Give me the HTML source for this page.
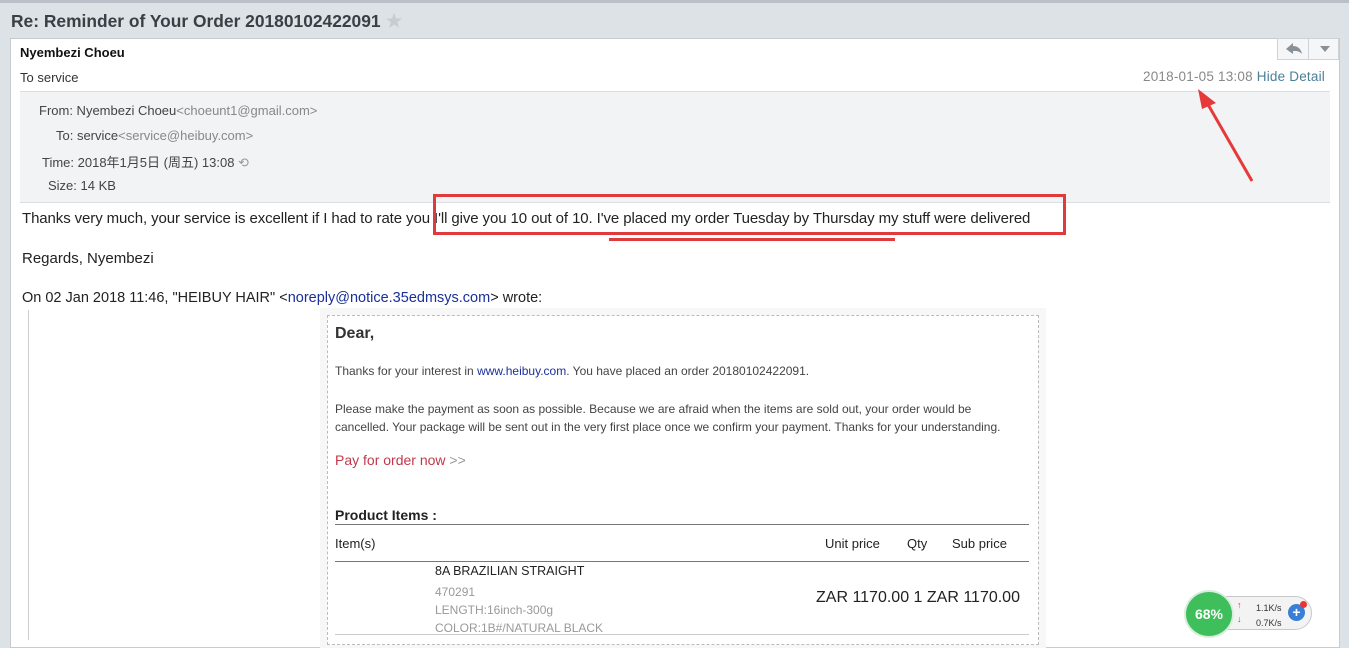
<!DOCTYPE html>
<html><head><meta charset="utf-8"><style>
*{margin:0;padding:0;box-sizing:border-box}
body{width:1349px;height:639px;overflow:hidden;background:#dde2e7;font-family:"Liberation Sans","Noto Sans CJK SC",sans-serif;position:relative;color:#222}
.a{position:absolute;white-space:nowrap}
</style></head><body>
<div class="a" style="left:0;top:0;width:1349px;height:3px;background:#b9c0c8"></div>
<div class="a" style="left:11px;top:8px;font-size:17.4px;font-weight:bold;color:#3a3f45">Re: Reminder of Your Order 20180102422091 <span style="color:#c8ccd0">★</span></div>
<div class="a" style="left:10px;top:38px;width:1330px;height:610px;background:#fff;border:1px solid #c5cbd1"></div>
<div class="a" style="left:1277px;top:38px;width:62px;height:22px;border:1px solid #cfd3d7;background:#f5f6f7"></div>
<div class="a" style="left:1308px;top:38px;width:1px;height:22px;background:#cfd3d7"></div>
<svg class="a" style="left:1284px;top:41px" width="20" height="16"><path d="M2 8 L9 2 L9 5 C14 5 17 8 18 13 C15 10 13 10 9 10 L9 13 Z" fill="#8a9097"/></svg>
<svg class="a" style="left:1319px;top:45px" width="12" height="8"><path d="M1 1 L11 1 L6 7 Z" fill="#8a9097"/></svg>
<div class="a" style="left:20px;top:45px;font-size:13px;font-weight:bold;color:#111">Nyembezi Choeu</div>
<div class="a" style="left:20px;top:70px;font-size:13px;color:#333">To service</div>
<div class="a" style="left:1143px;top:69px;font-size:13.5px;color:#888;letter-spacing:0.2px">2018-01-05 13:08 <span style="color:#4a7f95">Hide Detail</span></div>
<div class="a" style="left:20px;top:91px;width:1310px;height:111px;background:#f1f3f4;border-top:1px solid #dcdfe2"></div>
<div class="a" style="left:39px;top:103px;font-size:13px;color:#444">From: Nyembezi Choeu<span style="color:#888">&lt;choeunt1@gmail.com&gt;</span></div>
<div class="a" style="left:56px;top:128px;font-size:13px;color:#444">To: service<span style="color:#888">&lt;service@heibuy.com&gt;</span></div>
<div class="a" style="left:42px;top:152px;font-size:13px;color:#444">Time: 2018年1月5日 (周五) 13:08 <span style="color:#999">⟲</span></div>
<div class="a" style="left:48px;top:178px;font-size:13px;color:#444">Size: 14 KB</div>
<div class="a" style="left:20px;top:202px;width:1310px;height:1px;background:#dcdfe2"></div>
<svg class="a" style="left:1190px;top:85px" width="70" height="100"><path d="M62 96 L16 16" stroke="#e63a3a" stroke-width="3"/><path d="M8 4 L26 18 L12 24 Z" fill="#e63a3a"/></svg>
<div class="a" style="left:22px;top:210px;font-size:15px;color:#222;letter-spacing:-0.1px">Thanks very much, your service is excellent if I had to rate you I'll give you 10 out of 10. I've placed my order Tuesday by Thursday my stuff were delivered</div>
<div class="a" style="left:433px;top:194px;width:633px;height:41px;border:3px solid #e03a3c"></div>
<div class="a" style="left:609px;top:238px;width:286px;height:3px;background:#e03a3c"></div>
<div class="a" style="left:22px;top:250px;font-size:15px">Regards, Nyembezi</div>
<div class="a" style="left:22px;top:290px;font-size:14.5px">On 02 Jan 2018 11:46, "HEIBUY HAIR" &lt;<span style="color:#1a2f9a">noreply@notice.35edmsys.com</span>&gt; wrote:</div>
<div class="a" style="left:28px;top:310px;width:1px;height:330px;background:#ccc"></div>
<div class="a" style="left:320px;top:308px;width:726px;height:340px;background:#f7f7f7"></div>
<div class="a" style="left:327px;top:315px;width:712px;height:330px;background:#fff;border:1px dashed #bbb"></div>
<div class="a" style="left:335px;top:325px;font-size:16px;font-weight:bold;color:#333">Dear,</div>
<div class="a" style="left:335px;top:364px;font-size:12px;color:#444">Thanks for your interest in <span style="color:#1a2f9a">www.heibuy.com</span>. You have placed an order 20180102422091.</div>
<div class="a" style="left:335px;top:400px;font-size:12px;color:#444;line-height:18px">Please make the payment as soon as possible. Because we are afraid when the items are sold out, your order would be<br>cancelled. Your package will be sent out in the very first place once we confirm your payment. Thanks for your understanding.</div>
<div class="a" style="left:335px;top:452px;font-size:14px;color:#c0394a">Pay for order now <span style="color:#999">&gt;&gt;</span></div>
<div class="a" style="left:335px;top:507px;font-size:14px;font-weight:bold;color:#222">Product Items :</div>
<div class="a" style="left:335px;top:524px;width:694px;height:1px;background:#777"></div>
<div class="a" style="left:335px;top:536px;font-size:13px;color:#222">Item(s)</div>
<div class="a" style="left:825px;top:536px;font-size:13px;color:#222">Unit price</div>
<div class="a" style="left:907px;top:536px;font-size:13px;color:#222">Qty</div>
<div class="a" style="left:952px;top:536px;font-size:13px;color:#222">Sub price</div>
<div class="a" style="left:335px;top:561px;width:694px;height:1px;background:#777"></div>
<div class="a" style="left:435px;top:564px;font-size:12.5px;color:#222">8A BRAZILIAN STRAIGHT</div>
<div class="a" style="left:435px;top:583px;font-size:12px;color:#999;line-height:18px">470291<br>LENGTH:16inch-300g<br>COLOR:1B#/NATURAL BLACK</div>
<div class="a" style="left:816px;top:589px;font-size:16px;color:#222">ZAR 1170.00 1 ZAR 1170.00</div>
<div class="a" style="left:335px;top:634px;width:694px;height:1px;background:#ccc"></div>
<div class="a" style="left:1200px;top:596px;width:112px;height:34px;border-radius:17px;background:#f3f3f3;border:1px solid #c8c8c8"></div>
<div class="a" style="left:1184px;top:590px;width:50px;height:48px;border-radius:50%;background:#3fbe5c;border:2px solid #d8eedd;color:#fff;font-size:14px;font-weight:bold;text-align:center;line-height:44px">68%</div>
<div class="a" style="left:1237px;top:600px;font-size:9px;color:#e33">↑</div>
<div class="a" style="left:1237px;top:614px;font-size:9px;color:#393">↓</div>
<div class="a" style="left:1256px;top:601px;font-size:9px;color:#333;line-height:15px">1.1K/s<br>0.7K/s</div>
<div class="a" style="left:1288px;top:604px;width:17px;height:17px;border-radius:50%;background:#3a7fd6;color:#fff;font-size:14px;font-weight:bold;text-align:center;line-height:17px">+</div>
<div class="a" style="left:1300px;top:601px;width:7px;height:7px;border-radius:50%;background:#e33"></div>
</body></html>
